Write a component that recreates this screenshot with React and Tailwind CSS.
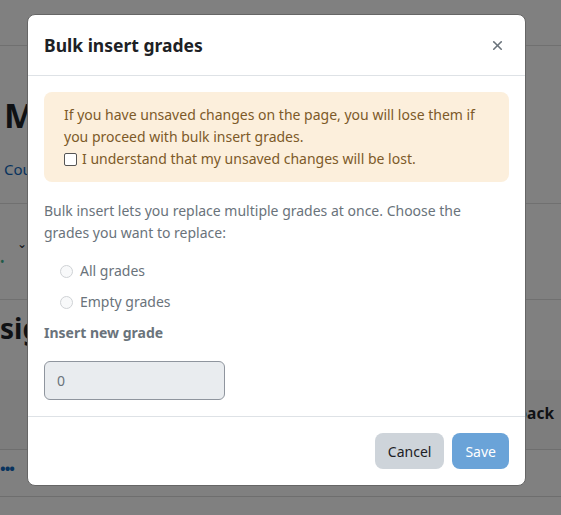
import React from 'react';
import { X } from 'lucide-react';

const font = { fontFamily: '"Noto Sans", "Open Sans", sans-serif' };

const Backdrop = () => (
  <div className="h-[515px] w-[561px] overflow-hidden bg-[#808080] text-[#0f1114]">
    {/* Page behind the dimmed overlay */}
    <div className="h-[46px] border-b border-[#707070]" />
    <div className="flex h-[158px] flex-col border-b border-[#707070] pl-[4px]">
      <div className="mt-[52px] text-[34px] font-bold leading-none">M</div>
      <div className="mt-[26px] text-[15px] text-[#08335e]">Course</div>
    </div>
    <div className="flex h-[96px] items-center gap-3 border-b border-[#707070]">
      <span className="mt-5 text-[12px] text-[#1f5a48]">•</span>
      <span className="mb-4 text-[12px]">⌄</span>
    </div>
    <div className="h-[80px] w-[27px] overflow-hidden pt-[14px]">
      <div className="whitespace-nowrap text-[28px] font-bold leading-none">sig</div>
    </div>
    <div className="flex h-[70px] items-center justify-end border-b border-[#6e6e6e] bg-[#7d7d7d] pr-[7px] pb-[2px] text-[15.5px] font-bold">
      Feedback
    </div>
    <div className="flex h-[47px] items-center border-b border-[#6e6e6e] text-[15px] font-bold text-[#08335e]">
      <span className="mt-[-10px] tracking-[-1px]">•••</span>
    </div>
  </div>
);

export default function App() {
  return (
    <div className="relative h-[515px] w-[561px]" style={font}>
      <Backdrop />
      <div className="absolute left-[27px] top-[14px] flex w-[499px] flex-col rounded-[8px] border border-[#666] bg-white">
        <div className="flex h-[61px] items-center justify-between border-b border-[#dee2e6] px-[16px]">
          <h5 className="text-[17.5px] font-bold text-[#1d2125]">Bulk insert grades</h5>
          <X className="mr-[4px] h-[15px] w-[15px] text-[#6a737b]" strokeWidth={2.6} />
        </div>
        <div className="px-[16px] pt-[16px] pb-[16px] text-[14px] leading-[22px]">
          <div className="rounded-[8px] bg-[#fcefdc] px-[20px] py-[12px] text-[#7d5a29]">
            <p>If you have unsaved changes on the page, you will lose them if you proceed with bulk insert grades.</p>
            <label className="flex items-center gap-[5px]">
              <span className="h-[13px] w-[13px] rounded-[2px] border border-[#555] bg-white" />
              I understand that my unsaved changes will be lost.
            </label>
          </div>
          <p className="mt-[18px] text-[#6a737b]">
            Bulk insert lets you replace multiple grades at once. Choose the grades you want to replace:
          </p>
          <div className="mt-[16px] flex flex-col gap-[9px] pl-[16px] text-[#6a737b]">
            <label className="flex items-center gap-[7px]">
              <span className="h-[13px] w-[13px] rounded-full border border-[#cfd2d5] bg-[#f8f9fa]" />
              All grades
            </label>
            <label className="flex items-center gap-[7px]">
              <span className="h-[13px] w-[13px] rounded-full border border-[#cfd2d5] bg-[#f8f9fa]" />
              Empty grades
            </label>
          </div>
          <div className="mt-[9px] font-bold text-[#6a737b]">Insert new grade</div>
          <div className="mt-[17px] flex h-[39px] w-[181px] items-center rounded-[6px] border border-[#8f959e] bg-[#e9ecef] px-[12px] text-[#6a737b]">
            0
          </div>
        </div>
        <div className="flex items-center justify-end gap-[8px] border-t border-[#dee2e6] px-[16px] py-[16px] text-[14px]">
          <button className="h-[36px] rounded-[8px] bg-[#ced4da] px-[13px] text-[#1d2125]">Cancel</button>
          <button className="h-[36px] rounded-[8px] bg-[#6aa3d8] px-[13px] text-white">Save</button>
        </div>
      </div>
    </div>
  );
}
